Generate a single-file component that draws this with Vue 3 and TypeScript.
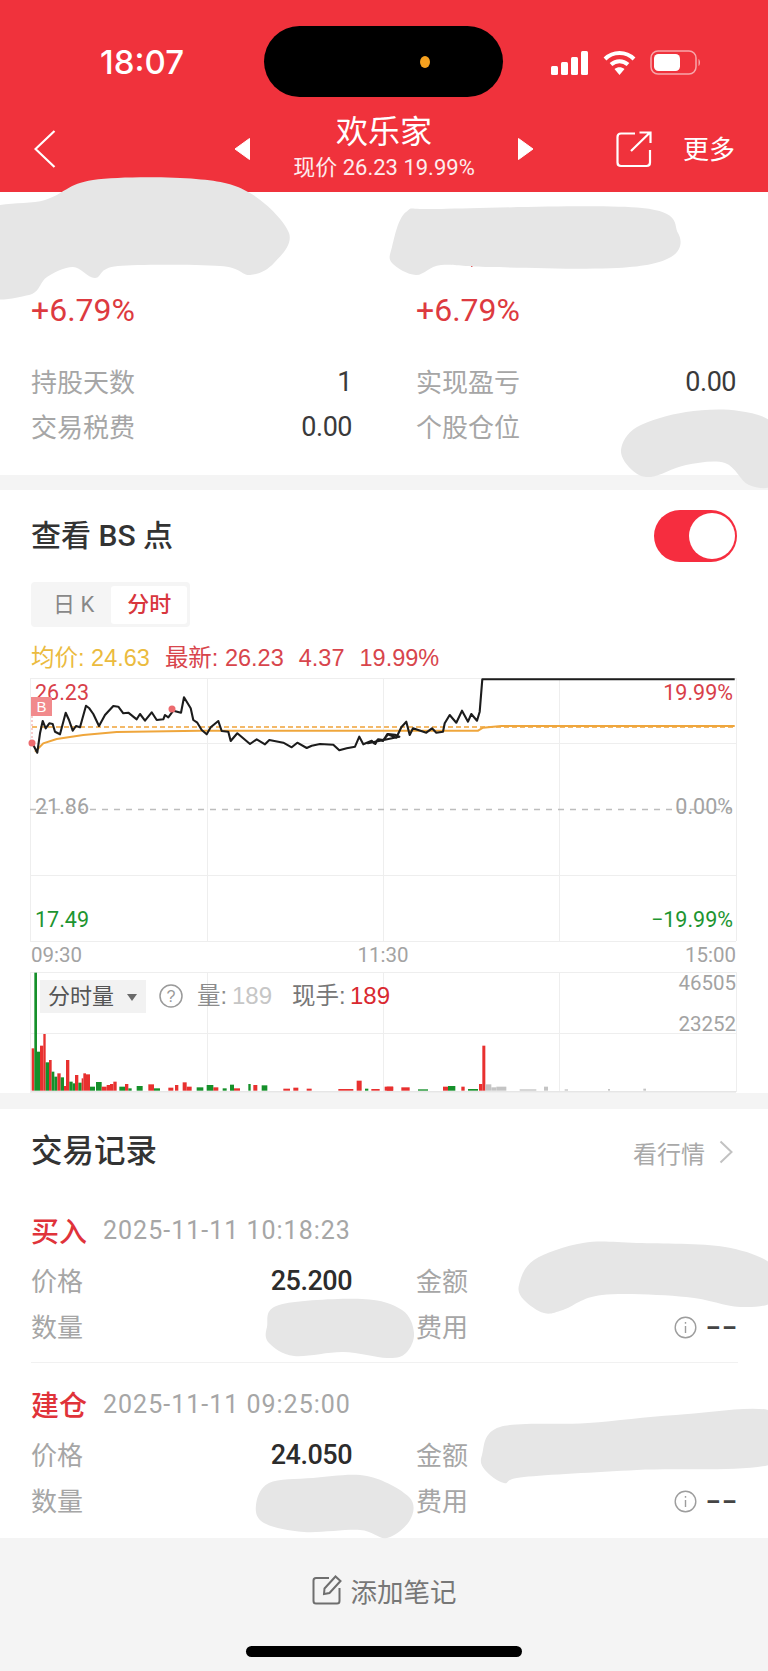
<script setup lang="ts">
type P = [number, number];

// Closed, smoothed outline through hand-traced points (Catmull-Rom to Bezier)
function smooth(pts: P[]): string {
  const n = pts.length;
  let d = `M${pts[0][0]} ${pts[0][1]}`;
  for (let i = 0; i < n; i++) {
    const p0 = pts[(i - 1 + n) % n], p1 = pts[i], p2 = pts[(i + 1) % n], p3 = pts[(i + 2) % n];
    const c1x = p1[0] + (p2[0] - p0[0]) / 6, c1y = p1[1] + (p2[1] - p0[1]) / 6;
    const c2x = p2[0] - (p3[0] - p1[0]) / 6, c2y = p2[1] - (p3[1] - p1[1]) / 6;
    d += `C${c1x.toFixed(1)} ${c1y.toFixed(1)} ${c2x.toFixed(1)} ${c2y.toFixed(1)} ${p2[0]} ${p2[1]}`;
  }
  return d + 'Z';
}

const masks: string[] = ([
  [[-20, 215], [45, 200], [93, 180], [196, 179], [250, 193], [289, 233], [274, 263], [250, 275], [220, 266], [118, 266], [95, 278], [73, 267], [47, 277], [29, 295], [-20, 292]],
  [[392, 247], [406, 212], [441, 209], [642, 208], [678, 233], [671, 257], [617, 268], [490, 267], [441, 265], [416, 275], [392, 263]],
  [[621, 450], [637, 427], [686, 412], [739, 411], [775, 427], [775, 482], [749, 485], [725, 463], [686, 465], [651, 477], [632, 470]],
  [[519, 1285], [534, 1260], [583, 1243], [637, 1243], [725, 1247], [775, 1267], [775, 1300], [740, 1307], [686, 1297], [602, 1295], [563, 1310], [544, 1313], [524, 1300]],
  [[267, 1327], [279, 1305], [362, 1299], [402, 1310], [414, 1333], [406, 1353], [387, 1358], [343, 1352], [294, 1356], [269, 1343]],
  [[482, 1455], [500, 1427], [588, 1423], [676, 1415], [775, 1412], [775, 1463], [637, 1470], [524, 1477], [504, 1483], [485, 1470]],
  [[256, 1505], [269, 1483], [313, 1478], [367, 1476], [409, 1497], [410, 1520], [387, 1538], [360, 1530], [304, 1532], [264, 1523]],
] as P[][]).map(smooth);

// Chart traces read from 3x crops: left crop origin (0,640), right crop origin (368,640)
const left: P[] = [[100, 315], [112, 338], [120, 280], [128, 243], [137, 265], [148, 250], [158, 252], [165, 275], [180, 283], [197, 218], [207, 240], [218, 272], [228, 258], [240, 262], [258, 197], [268, 205], [280, 222], [297, 258], [315, 225], [340, 198], [355, 200], [370, 220], [385, 218], [410, 238], [420, 222], [435, 242], [455, 217], [470, 240], [490, 238], [495, 225], [505, 232], [520, 212], [543, 218], [552, 172], [572, 205], [580, 240], [592, 248], [605, 270], [620, 283], [632, 262], [655, 243], [665, 273], [685, 275], [692, 303], [712, 280], [750, 312], [770, 298], [795, 313], [808, 300], [850, 308], [875, 322], [892, 308], [920, 324], [935, 317], [960, 312], [1000, 314], [1018, 331], [1040, 325], [1065, 320], [1078, 290], [1090, 313], [1115, 302], [1122, 310], [1135, 298], [1150, 300], [1165, 282], [1185, 284], [1198, 290]];
const right: P[] = [[0, 310], [15, 305], [22, 312], [30, 298], [45, 303], [58, 282], [85, 293], [100, 262], [115, 245], [125, 285], [135, 265], [175, 278], [192, 265], [205, 278], [225, 275], [230, 250], [245, 225], [265, 248], [282, 212], [300, 245], [310, 222], [327, 242], [335, 215], [343, 118], [1100, 118]];
const toPts = (l: P[], ox: number) => l.map(([x, y]) => `${(ox + x / 3).toFixed(1)},${(640 + y / 3).toFixed(1)}`).join(' ');
const priceLine = toPts(left, 0) + ' ' + toPts(right, 368);
const avgLine = toPts([[105, 335], [130, 310], [170, 297], [250, 285], [350, 276], [600, 272], [1198, 272]], 0) + ' ' + toPts([[330, 272], [345, 263], [400, 258], [1100, 258]], 368);

const R = '#e8302f', G = '#15902a', K = '#c4c4c4';
type Bar = [number, number, number, string];
const barsL: Bar[] = [[95, 103, 355, R], [103, 111, 128, G], [111, 120, 365, G], [120, 130, 347, R], [130, 137, 312, R], [137, 147, 397, G], [147, 155, 390, R], [155, 163, 425, G], [163, 172, 440, G], [172, 182, 430, R], [182, 192, 442, G], [192, 198, 468, R], [198, 208, 390, R], [208, 218, 455, G], [218, 225, 460, G], [225, 235, 435, R], [235, 245, 458, G], [245, 250, 445, R], [250, 258, 430, R], [258, 270, 433, R], [270, 285, 470, G], [288, 305, 456, G], [305, 320, 470, R], [320, 330, 465, R], [330, 340, 462, R], [340, 350, 455, R], [358, 375, 470, G], [375, 385, 462, R], [385, 395, 475, G], [410, 428, 468, G], [445, 462, 463, R], [462, 480, 475, G], [505, 520, 473, R], [525, 535, 465, R], [548, 560, 457, R], [560, 575, 470, R], [590, 610, 472, G], [620, 640, 465, G], [640, 655, 472, R], [668, 680, 475, G], [690, 702, 464, G], [702, 720, 475, R], [745, 752, 462, G], [760, 772, 465, R], [785, 802, 466, G], [850, 870, 476, R], [880, 895, 473, R], [920, 935, 476, R], [1015, 1060, 477, R], [1070, 1085, 452, R], [1095, 1105, 476, G], [1160, 1180, 470, R]];
const barsR: Bar[] = [[10, 35, 477, R], [50, 75, 470, R], [100, 125, 472, R], [150, 180, 478, G], [225, 240, 470, R], [240, 262, 468, G], [280, 290, 470, R], [300, 330, 477, G], [333, 343, 462, R], [343, 352, 347, R], [352, 370, 463, K], [370, 385, 472, K], [385, 415, 470, K], [455, 505, 478, K], [528, 540, 470, K], [590, 600, 478, K], [720, 726, 477, K], [826, 834, 476, K]];
const toRect = (b: Bar, ox: number) => ({ x: ox + b[0] / 3, w: (b[1] - b[0]) / 3, y: 930 + b[2] / 3, h: (482 - b[2]) / 3, c: b[3] });
const bars = [...barsL.map((b) => toRect(b, 0)), ...barsR.map((b) => toRect(b, 368))];

const hLines = [678, 743, 875, 941, 972, 1033, 1092];
const vTop = [[30, 678, 941], [207, 678, 941], [383, 678, 941], [559, 678, 941], [736, 678, 941], [30, 972, 1092], [207, 972, 1092], [383, 972, 1092], [559, 972, 1092], [736, 972, 1092]];

const trades = [
  { kind: '买入', time: '2025-11-11 10:18:23', price: '25.200', amount: '' },
  { kind: '建仓', time: '2025-11-11 09:25:00', price: '24.050', amount: '0.00' },
];
</script>

<template>
  <div class="page">
    <header class="top">
      <div class="status">
        <span class="clock">18:07</span>
        <div class="island"><i class="cam"></i></div>
        <div class="sys">
          <svg width="38" height="24" viewBox="0 0 38 24"><g fill="#fff"><rect x="0" y="15" width="7" height="9" rx="1.5"/><rect x="10" y="11" width="7" height="13" rx="1.5"/><rect x="20" y="6" width="7" height="18" rx="1.5"/><rect x="30" y="0" width="7" height="24" rx="1.5"/></g></svg>
          <svg width="33" height="24" viewBox="0 0 33 24" fill="none" stroke="#fff" stroke-width="4"><path d="M2 8C10 0 23 0 31 8"/><path d="M8 13.500C13 9 20 9 25 13.500"/><path d="M16.500 24L11.500 18C14.500 15.500 18.500 15.500 21.500 18Z" fill="#fff" stroke="none"/></svg>
          <svg width="51" height="25" viewBox="0 0 51 25"><rect x="1" y="1" width="45" height="23" rx="7" fill="none" stroke="#f7a6aa" stroke-width="1.500"/><rect x="4" y="4" width="26" height="17" rx="4.500" fill="#fff"/><path d="M48.500 9c2 1 2 6 0 7z" fill="#f7a6aa"/></svg>
        </div>
      </div>
      <nav class="nav">
        <svg class="back" width="22" height="38" viewBox="0 0 22 38" fill="none" stroke="#fff" stroke-width="2.200"><path d="M20.500 1L1.500 19L20.500 37"/></svg>
        <div class="mid">
          <svg width="16" height="22" viewBox="0 0 16 22"><path d="M15.500 0.500V21.500L1 11Z" fill="#fff" stroke="#fff" stroke-linejoin="round"/></svg>
          <div class="name">
            <div class="title">欢乐家</div>
            <div class="sub">现价 26.23 19.99%</div>
          </div>
          <svg width="16" height="22" viewBox="0 0 16 22"><path d="M0.500 0.500V21.500L15 11Z" fill="#fff" stroke="#fff" stroke-linejoin="round"/></svg>
        </div>
        <div class="acts">
          <svg width="36" height="37" viewBox="0 0 36 37" fill="none" stroke="#fff" stroke-width="2.200"><path d="M19 2.500H5Q1.500 2.500 1.500 6V31.500Q1.500 35 5 35H30.500Q34 35 34 31.500V19"/><path d="M15 20L34 1.500M23.500 1.500H34.500V12"/></svg>
          <span class="more">更多</span>
        </div>
      </nav>
    </header>

    <section class="card hold">
      <div class="cols pct"><span>+6.79%</span><span>+6.79%</span></div>
      <div class="cols">
        <div class="pair"><span class="k">持股天数</span><span class="v">1</span></div>
        <div class="pair"><span class="k">实现盈亏</span><span class="v">0.00</span></div>
      </div>
      <div class="cols">
        <div class="pair"><span class="k">交易税费</span><span class="v">0.00</span></div>
        <div class="pair"><span class="k">个股仓位</span></div>
      </div>
    </section>

    <section class="card chart">
      <div class="chart-head">
        <h2>查看 BS 点</h2>
        <div class="toggle"><i></i></div>
      </div>
      <div class="seg"><span>日 K</span><span class="on">分时</span></div>
      <div class="legend">
        <span class="avg">均价: 24.63</span>
        <span>最新: 26.23</span>
        <span>4.37</span>
        <span>19.99%</span>
      </div>
      <svg class="plot" width="768" height="420" viewBox="0 673 768 420">
        <g stroke="#eeeeee" stroke-width="1">
          <line v-for="y in hLines" :key="y" x1="30" x2="736" :y1="y + 0.5" :y2="y + 0.5"/>
          <line v-for="(l, i) in vTop" :key="i" :x1="l[0] + 0.5" :x2="l[0] + 0.5" :y1="l[1]" :y2="l[2]"/>
        </g>
        <line x1="30" x2="736" y1="809.500" y2="809.500" stroke="#bdbdbd" stroke-width="1.500" stroke-dasharray="6 6"/>
        <g class="t21">
          <text x="35" y="700" fill="#d8404a">26.23</text>
          <text x="35" y="814" fill="#a3a3a3">21.86</text>
          <text x="35" y="927" fill="#1d9530">17.49</text>
          <text x="733" y="700" text-anchor="end" fill="#d8404a">19.99%</text>
          <text x="733" y="814" text-anchor="end" fill="#a3a3a3">0.00%</text>
          <text x="733" y="927" text-anchor="end" fill="#1d9530">−19.99%</text>
        </g>
        <line x1="32" x2="736" y1="727" y2="727" stroke="#f0a238" stroke-width="1.500" stroke-dasharray="5 3"/>
        <polyline :points="avgLine" fill="none" stroke="#efa63c" stroke-width="2"/>
        <polyline :points="priceLine" fill="none" stroke="#1c1c1c" stroke-width="2.100" stroke-linejoin="round"/>
        <circle cx="172" cy="709" r="3.500" fill="#ec6a6e"/>
        <circle cx="32" cy="743" r="3.500" fill="#ec6a6e"/>
        <line x1="32" x2="32" y1="716" y2="740" stroke="#f19a9a" stroke-width="1" stroke-dasharray="2 2"/>
        <rect x="31" y="697" width="21" height="19" fill="#f18a8c"/>
        <text x="41.500" y="712" text-anchor="middle" class="b">B</text>

        <g class="t20" fill="#a3a3a3">
          <text x="31" y="962">09:30</text>
          <text x="383" y="962" text-anchor="middle">11:30</text>
          <text x="736" y="962" text-anchor="end">15:00</text>
          <text x="736" y="990" text-anchor="end">46505</text>
          <text x="736" y="1031" text-anchor="end">23252</text>
        </g>
        <rect v-for="(b, i) in bars" :key="i" :x="b.x" :y="b.y" :width="b.w" :height="b.h" :fill="b.c"/>
        <line x1="31" x2="736" y1="1091.500" y2="1091.500" stroke="#e6e6e6"/>

        <rect x="40" y="980" width="106" height="33" fill="#f2f2f2"/>
        <text x="48" y="1004" class="t22" fill="#555">分时量</text>
        <path d="M127 994H137L132 1001Z" fill="#6a6a6a"/>
        <circle cx="171" cy="996" r="11" fill="none" stroke="#9a9a9a" stroke-width="1.500"/>
        <text x="171" y="1002" text-anchor="middle" class="t16" fill="#9a9a9a">?</text>
        <text x="197" y="1004" class="t23" fill="#8c8c8c">量:</text>
        <text x="232" y="1004" class="t24" fill="#c6c6c6">189</text>
        <text x="292" y="1004" class="t23" fill="#777">现手:</text>
        <text x="350" y="1004" class="t24" fill="#d9282f">189</text>
      </svg>
    </section>

    <section class="card log">
      <div class="log-head">
        <h2>交易记录</h2>
        <div class="go">看行情
          <svg width="14" height="24" viewBox="0 0 14 24" fill="none" stroke="#c2c2c2" stroke-width="2"><path d="M1.500 1.500L12.500 12L1.500 22.500"/></svg>
        </div>
      </div>
      <div v-for="t in trades" :key="t.time" class="trade">
        <div class="trade-head"><b>{{ t.kind }}</b><span>{{ t.time }}</span></div>
        <div class="cols">
          <div class="pair"><span class="k">价格</span><span class="v strong">{{ t.price }}</span></div>
          <div class="pair"><span class="k">金额</span><span class="v strong">{{ t.amount }}</span></div>
        </div>
        <div class="cols">
          <div class="pair"><span class="k">数量</span></div>
          <div class="pair"><span class="k">费用</span>
            <span class="fee">
              <svg width="23" height="23" viewBox="0 0 23 23" fill="none" stroke="#9d9d9d" stroke-width="1.400"><circle cx="11.500" cy="11.500" r="10.300"/><path d="M11.500 10V17M11.500 6V7.800"/></svg>
              <span class="dash">--</span>
            </span>
          </div>
        </div>
      </div>
    </section>

    <footer class="foot">
      <div class="note">
        <svg width="30" height="30" viewBox="0 0 30 30" fill="none" stroke="#6e6e6e" stroke-width="2"><path d="M17 3H4Q1.500 3 1.500 5.500V26Q1.500 28.500 4 28.500H25Q27.500 28.500 27.500 26V13"/><path d="M12 19L12.500 13.500L23.500 1.500L28.500 6L17.500 18Z"/></svg>
        <span>添加笔记</span>
      </div>
      <i class="home"></i>
    </footer>

    <svg class="masks" width="768" height="1671" viewBox="0 0 768 1671">
      <rect x="471" y="264" width="1.500" height="3" fill="#e0353a"/>
      <path v-for="(d, i) in masks" :key="i" :d="d" fill="#e6e6e6"/>
    </svg>
  </div>
</template>

<style>
body { margin: 0; background: #f4f4f4; }
</style>

<style scoped>
.page { position: relative; width: 768px; height: 1671px; overflow: hidden; background: #f4f4f4; display: flex; flex-direction: column; font-family: "Roboto", "Noto Sans CJK SC", sans-serif; color: #333; }
.top { height: 192px; background: #f0323c; color: #fff; flex: none; }
.status { height: 97px; padding-top: 26px; box-sizing: border-box; display: flex; position: relative; }
.clock { position: absolute; left: 100px; top: 43px; font-size: 33px; line-height: 38px; font-weight: 500; font-family: "Inter", sans-serif; letter-spacing: 0; }
.island { margin-left: 264px; width: 239px; height: 71px; border-radius: 36px; background: #000; position: relative; }
.cam { position: absolute; left: 156px; top: 30px; width: 10px; height: 12px; border-radius: 50%; background: #f6a11f; }
.sys { margin-left: 48px; margin-top: 24px; height: 25px; display: flex; align-items: center; gap: 14px; }
.nav { height: 95px; position: relative; display: flex; }
.back { position: absolute; left: 34px; top: 33px; }
.mid { position: absolute; left: 234px; width: 300px; top: 0; height: 95px; display: flex; align-items: center; justify-content: space-between; }
.name { text-align: center; flex: 1; }
.title { font-size: 32px; line-height: 44px; margin-top: 2px; }
.sub { font-size: 22px; line-height: 28px; color: #fdeced; white-space: nowrap; }
.mid svg { margin-top: 9px; }
.acts { position: absolute; left: 616px; top: 34px; display: flex; align-items: center; }
.more { margin-left: 31px; font-size: 26px; line-height: 36px; }
.card { background: #fff; flex: none; }
.cols { display: grid; grid-template-columns: 321px 320px; column-gap: 64px; padding-left: 31px; }
.pair { height: 46px; display: flex; justify-content: space-between; align-items: center; font-size: 26px; }
.k { color: #a6a6a6; white-space: nowrap; margin-bottom: 4px; }
.v { color: #3a3a3a; font-size: 27px; letter-spacing: -0.5px; }
.hold { height: 283px; padding-top: 100px; box-sizing: border-box; }
.hold .pair { height: 45px; }
.hold .v { margin-bottom: 2px; }
.pct { height: 36px; margin-bottom: 32px; font-size: 32px; line-height: 36px; color: #dd3a40; }
.chart { margin-top: 15px; height: 603px; padding-top: 20px; box-sizing: border-box; }
.chart-head { height: 52px; padding: 0 31px; display: flex; justify-content: space-between; align-items: center; }
h2 { margin: 0; font-size: 30px; line-height: 40px; font-weight: 500; color: #333; }
.toggle { width: 83px; height: 52px; border-radius: 26px; background: #f62d3f; display: flex; justify-content: flex-end; align-items: center; padding-right: 2px; box-sizing: border-box; }
.toggle i { width: 46px; height: 46px; border-radius: 50%; background: #fff; }
.seg { margin: 20px 0 0 31px; width: 159px; height: 45px; border-radius: 4px; background: #f5f5f5; display: flex; align-items: center; padding-left: 22px; box-sizing: border-box; font-size: 22px; color: #888; white-space: nowrap; }
.seg span { line-height: 38px; }
.seg .on { margin-left: 17px; width: 76px; height: 38px; background: #fff; color: #d8363d; text-align: center; border-radius: 3px; font-weight: 500; }
.legend { margin: 16px 0 0 31px; height: 30px; display: flex; gap: 15px; font-family: "Liberation Sans", "Noto Sans CJK SC", sans-serif; font-size: 23.500px; line-height: 30px; color: #d8454c; white-space: nowrap; }
.avg { color: #ebbb3e; }
.plot { display: block; }
.t21 text, .t20 { font-family: "Roboto", sans-serif; }
.t21 text { font-size: 21.500px; }
.t20 { font-size: 20.500px; }
.t22 { font-family: "Liberation Sans", "Noto Sans CJK SC", sans-serif; font-size: 22px; }
.t23 { font-family: "Liberation Sans", "Noto Sans CJK SC", sans-serif; font-size: 23.500px; }
.t24 { font-family: "Liberation Sans", sans-serif; font-size: 24px; }
.t16 { font-family: "Liberation Sans", sans-serif; font-size: 16px; }
.b { font-family: "Liberation Sans", sans-serif; font-size: 15px; fill: #fff; }
.log { margin-top: 16px; height: 429px; padding-top: 21px; box-sizing: border-box; }
.log-head { height: 44px; padding: 0 35px 0 31px; display: flex; justify-content: space-between; align-items: center; margin-bottom: 38px; }
.log-head h2 { font-size: 31.500px; }
.go { display: flex; align-items: center; gap: 14px; font-size: 24px; color: #a9a9a9; }
.log-head + .trade { padding-bottom: 12px; }
.trade + .trade { padding-top: 24px; position: relative; }
.trade + .trade::before { content: ""; position: absolute; left: 31px; width: 707px; top: 0; height: 1px; background: #f1f1f1; }
.trade-head { height: 36px; padding-left: 31px; display: flex; align-items: center; gap: 16px; margin-bottom: 10px; }
.trade-head b { font-size: 28px; font-weight: 500; color: #e0333a; }
.trade-head span { font-size: 25px; letter-spacing: 1px; color: #a6a6a6; }
.strong { font-weight: 500; color: #2c2c2c; }
.fee { display: flex; align-items: center; gap: 10px; }
.dash { width: 31px; margin-right: -2px; text-align: right; font-size: 26px; font-weight: 700; color: #444; transform: scaleX(1.6); transform-origin: right center; }
.foot { flex: 1; display: flex; flex-direction: column; align-items: center; padding-top: 34px; box-sizing: border-box; background: #f4f4f4; }
.note { height: 36px; display: flex; align-items: center; gap: 9px; font-size: 26.500px; color: #777; }
.home { margin-top: 38px; width: 276px; height: 11px; border-radius: 6px; background: #000; }
.masks { position: absolute; left: 0; top: 0; pointer-events: none; }
</style>
